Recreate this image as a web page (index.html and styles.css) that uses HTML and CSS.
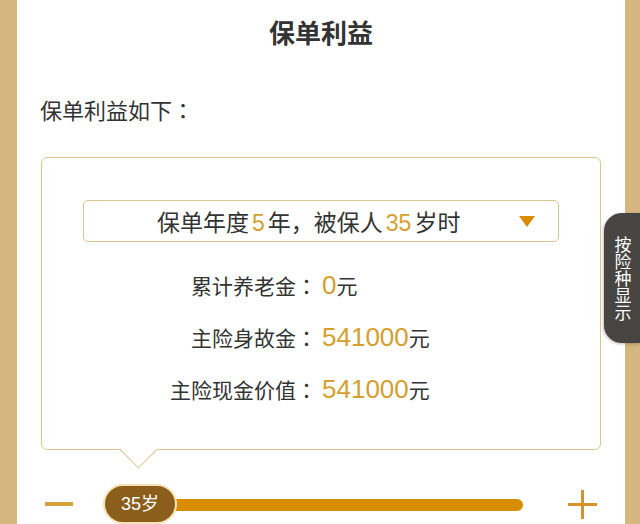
FILE: index.html
```html
<!DOCTYPE html>
<html lang="zh-CN">
<head>
<meta charset="utf-8">
<title>保单利益</title>
<link rel="stylesheet" href="styles.css">
</head>
<body>
<div class="page">
  <div class="bar bar-left"></div>
  <main class="main">
    <h1 class="title">保单利益</h1>
    <p class="subtitle">保单利益如下<span class="colon" lang="zh-TW">：</span></p>
    <section class="card">
      <div class="select">
        <span class="select-text">保单年度<em class="num">5</em>年，被保人<em class="num">35</em>岁时</span>
        <span class="caret"></span>
      </div>
      <div class="rows">
        <div class="row"><span class="label">累计养老金<span class="colon" lang="zh-TW">：</span></span><span class="value"><em class="amount">0</em>元</span></div>
        <div class="row"><span class="label">主险身故金<span class="colon" lang="zh-TW">：</span></span><span class="value"><em class="amount">541000</em>元</span></div>
        <div class="row"><span class="label">主险现金价值<span class="colon" lang="zh-TW">：</span></span><span class="value"><em class="amount">541000</em>元</span></div>
      </div>
      <span class="pointer"></span>
    </section>
    <div class="slider">
      <span class="minus"></span>
      <div class="track-area">
        <div class="track"></div>
        <div class="thumb">35岁</div>
      </div>
      <span class="plus"></span>
    </div>
  </main>
  <div class="bar bar-right"></div>
  <div class="side-tab"><span class="side-text">按险种显示</span></div>
</div>
</body>
</html>
```
FILE: styles.css
```css
html, body {
  margin: 0;
  padding: 0;
  background: #ffffff;
}
body {
  width: 640px;
  height: 524px;
  overflow: hidden;
  font-family: "Liberation Sans", "Noto Sans CJK SC", sans-serif;
  color: #333333;
}
.page {
  position: relative;
  display: flex;
  width: 640px;
  height: 524px;
}
.bar {
  background: #d3b77e;
  flex: none;
}
.bar-left { width: 17px; }
.bar-right { width: 15px; }
.main {
  flex: 1;
  display: flex;
  flex-direction: column;
}
.title {
  margin: 0;
  height: 68px;
  line-height: 68px;
  text-align: center;
  font-size: 26px;
  font-weight: 700;
  color: #333333;
}
.subtitle {
  margin: 20px 0 0 23px;
  height: 42px;
  line-height: 42px;
  font-size: 22px;
  color: #333333;
}
.colon {
  font-family: "Noto Sans CJK TC", sans-serif;
}
.card {
  position: relative;
  margin: 27px 24px 0 24px;
  height: 289px;
  border: 1px solid #dcc58e;
  border-radius: 6px;
  padding: 42px 41px 0 41px;
  background: #ffffff;
}
.select {
  display: flex;
  align-items: center;
  height: 40px;
  border: 1px solid #dcc58e;
  border-radius: 5px;
  padding: 0 23px 0 73px;
}
.select-text {
  font-size: 23px;
  white-space: pre;
  color: #333333;
}
.num {
  font-style: normal;
  color: #d4a030;
  font-size: 23px;
  margin: 0 3px;
}
.caret {
  margin-left: auto;
  width: 0;
  height: 0;
  border-left: 8px solid transparent;
  border-right: 8px solid transparent;
  border-top: 11px solid #d98c00;
}
.rows {
  margin-top: 17px;
  display: flex;
  flex-direction: column;
}
.row {
  display: flex;
  height: 52px;
  align-items: center;
}
.label {
  width: 234px;
  text-align: right;
  font-size: 21px;
  color: #333333;
}
.value {
  margin-left: 5px;
  font-size: 21px;
  color: #333333;
  display: flex;
  align-items: baseline;
}
.amount {
  font-style: normal;
  font-size: 26px;
  color: #d69e2e;
}
.pointer {
  position: absolute;
  left: 83px;
  bottom: -14px;
  width: 27px;
  height: 27px;
  background: #ffffff;
  border-right: 1px solid #dcc58e;
  border-bottom: 1px solid #dcc58e;
  transform: rotate(45deg);
  box-sizing: border-box;
}
.slider {
  margin-top: 34px;
  display: flex;
  align-items: center;
  height: 40px;
  padding: 0 28px;
}
.minus {
  width: 28px;
  height: 4px;
  background: #d8a03a;
  flex: none;
}
.track-area {
  position: relative;
  flex: 1;
  height: 40px;
  margin: 0 45px 0 30px;
  display: flex;
  align-items: center;
}
.track {
  margin-left: 17px;
  flex: 1;
  height: 12px;
  border-radius: 6px;
  background: #d88c00;
  margin-top: 2px;
}
.thumb {
  position: absolute;
  left: 0;
  top: 0;
  width: 74px;
  height: 40px;
  box-sizing: border-box;
  border: 2px solid #f6e2b8;
  border-radius: 20px;
  background: #8c5e1c;
  color: #ffffff;
  font-size: 18px;
  line-height: 36px;
  text-align: center;
}
.plus {
  position: relative;
  width: 29px;
  height: 29px;
  flex: none;
}
.plus::before,
.plus::after {
  content: "";
  position: absolute;
  background: #d8922a;
}
.plus::before {
  left: 0;
  right: 0;
  top: 13px;
  height: 3px;
}
.plus::after {
  top: 0;
  bottom: 0;
  left: 13px;
  width: 3px;
}
.side-tab {
  position: absolute;
  right: 0;
  top: 213px;
  width: 36px;
  height: 130px;
  background: #474542;
  border-radius: 18px 0 0 18px;
  display: flex;
  align-items: center;
  justify-content: center;
  box-shadow: -1px 1px 3px rgba(0,0,0,0.25);
}
.side-text {
  writing-mode: vertical-rl;
  text-orientation: upright;
  font-family: "Noto Sans CJK SC", sans-serif;
  font-size: 17px;
  line-height: 17px;
  color: #ffffff;
  margin-left: 2px;
}
```
